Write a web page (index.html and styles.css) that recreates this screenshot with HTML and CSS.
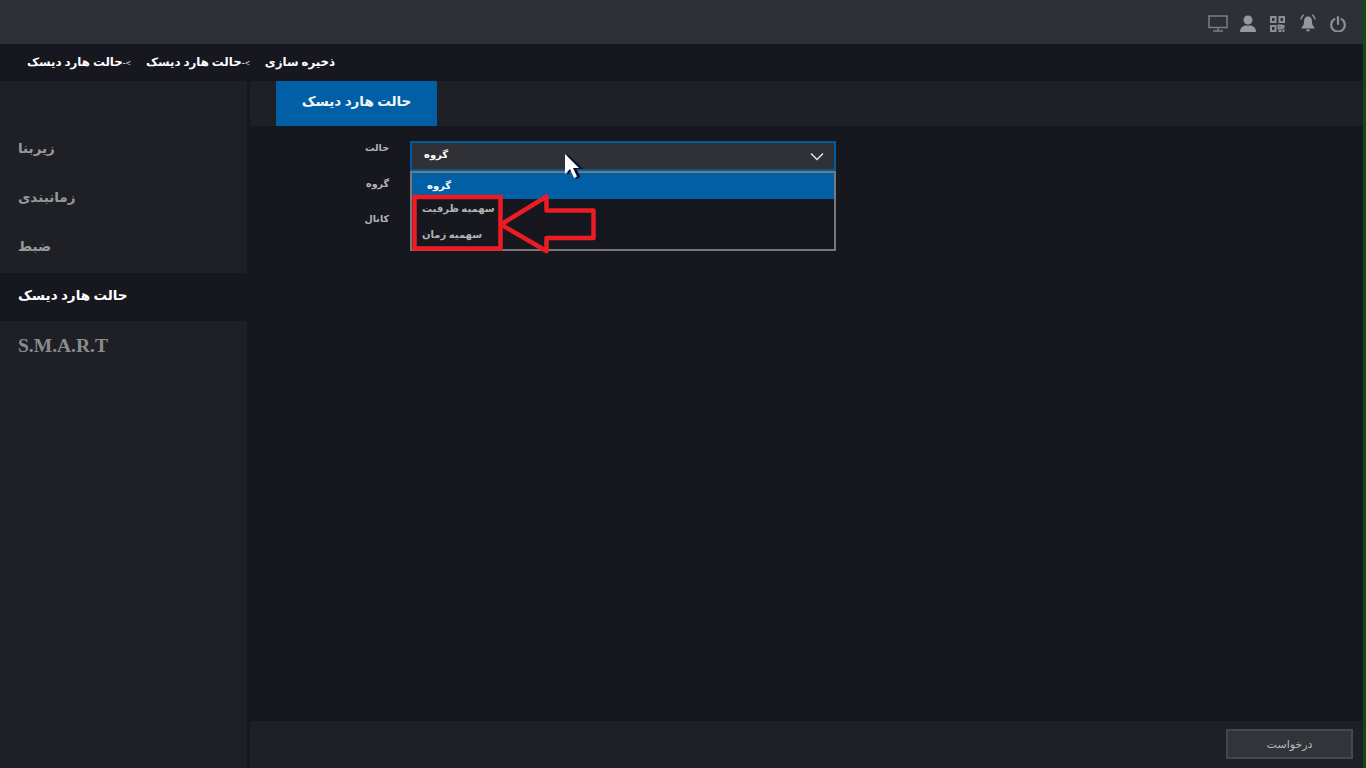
FILE: index.html
```html
<!DOCTYPE html>
<html lang="fa">
<head>
    <meta charset="UTF-8">
    <meta name="viewport" content="width=device-width, initial-scale=1.0">
    <title>حالت هارد دیسک</title>
    <link rel="stylesheet" href="styles.css">
</head>
<body>
    <div class="screen">
        <header class="topbar">
            <svg class="icon" width="20" height="17" viewBox="0 0 20 17" fill="none" stroke="#7b7e82" stroke-width="1.5"><rect x="1" y="1" width="18" height="11.500"/><path d="M10 12.500v3M5 16h10"/></svg>
            <svg class="icon icon-user" width="16" height="17" viewBox="0 0 16 17" fill="#96989b"><circle cx="8" cy="5" r="4.500"/><path d="M0 17c0-4 2.500-6 5-6.500h6c2.500.5 5 2.500 5 6.500z"/></svg>
            <svg class="icon" width="15" height="16" viewBox="0 0 15 16" fill="none" stroke="#8d9093" stroke-width="2"><rect x="1" y="1" width="4.500" height="5"/><rect x="9.500" y="1" width="4.500" height="5"/><rect x="1" y="10" width="4.500" height="5"/><path d="M8.500 9.500h3v3h-3zM13.500 9v3.500M8.500 15h3M13.500 13.500V16"/></svg>
            <svg class="icon" width="16" height="18" viewBox="0 0 16 18" fill="#96989b"><path d="M8 2.500c-2.800 0-4 2-4 5 0 2.800-.7 4.300-2.500 6v1h13v-1c-1.800-1.700-2.500-3.200-2.500-6 0-3-1.200-5-4-5z"/><path d="M6 15.500h4a2 2 0 0 1-4 0z"/><path d="M.7 5.500C1.200 3.500 2.200 2 3.800.9M15.300 5.500c-.5-2-1.500-3.500-3.100-4.600" fill="none" stroke="#96989b" stroke-width="1.300"/></svg>
            <svg class="icon" width="16" height="16" viewBox="0 0 16 16" fill="none" stroke="#8d9093" stroke-width="2.200" stroke-linecap="round"><path d="M8 1.200v6.800"/><path d="M4.300 3.200a6.800 6.800 0 1 0 7.400 0"/></svg>
        </header>

        <nav class="breadcrumb" dir="rtl">
            <span>ذخیره سازی</span>
            <span class="crumb-sep">&gt;-</span>
            <span>حالت هارد دیسک</span>
            <span class="crumb-sep">&gt;-</span>
            <span>حالت هارد دیسک</span>
        </nav>

        <div class="main">
            <aside class="sidebar">
                <a class="side-item" dir="rtl">زیربنا</a>
                <a class="side-item" dir="rtl">زمانبندی</a>
                <a class="side-item" dir="rtl">ضبط</a>
                <a class="side-item active" dir="rtl">حالت هارد دیسک</a>
                <a class="side-item smart">S.M.A.R.T</a>
            </aside>

            <section class="panel">
                <div class="tabs">
                    <div class="tab" dir="rtl">حالت هارد دیسک</div>
                </div>

                <div class="content">
                    <div class="labels">
                        <label dir="rtl">حالت</label>
                        <label dir="rtl">گروه</label>
                        <label dir="rtl">کانال</label>
                    </div>
                    <div class="select-wrap">
                        <div class="select">
                            <span dir="rtl">گروه</span>
                            <svg width="14" height="9" viewBox="0 0 14 9" fill="none" stroke="#e4e5e6" stroke-width="1.500"><path d="M1 1.500l6 6 6-6"/></svg>
                        </div>
                        <ul class="options">
                            <li class="selected"><span dir="rtl">گروه</span></li>
                            <li><span dir="rtl">سهمیه ظرفیت</span></li>
                            <li><span dir="rtl">سهمیه زمان</span></li>
                        </ul>
                    </div>
                </div>

                <div class="footer">
                    <button class="apply" dir="rtl">درخواست</button>
                </div>
            </section>
        </div>

        <div class="edge"></div>

        <svg class="markup" width="190" height="66" viewBox="0 0 190 66" fill="none" stroke="#ed1c24" stroke-width="4.500">
            <rect x="2.500" y="5" width="86" height="51.500"/>
            <path d="M89 32.500l45.500-28v14h47V46h-47v13z" stroke-linejoin="round"/>
        </svg>

        <svg class="cursor" width="20" height="28" viewBox="0 0 20 28"><path d="M3 1v21l5-5 4 9 4-2-4-8h7z" fill="#0a1230" transform="translate(1.500 0)"/><path d="M2 1v20l5-5 4 9 3-1.500-4-8.500h6z" fill="#fff"/></svg>
    </div>
</body>
</html>
```

FILE: styles.css
```css
* {
    box-sizing: border-box;
}
html, body {
    margin: 0;
    padding: 0;
    height: 100%;
    overflow: hidden;
}
body {
    font-family: "Liberation Serif", "DejaVu Sans", serif;
    background: #17181f;
    color: #fff;
}
.screen {
    position: relative;
    width: 1366px;
    height: 768px;
    display: flex;
    flex-direction: column;
    overflow: hidden;
}
.topbar {
    height: 44px;
    flex: none;
    background: #2d3037;
    display: flex;
    align-items: flex-end;
    justify-content: flex-end;
    gap: 14.5px;
    padding: 0 20px 12px 0;
}
.icon {
    display: block;
}
.icon-user {
    margin-left: -2.500px;
}
.breadcrumb {
    height: 37px;
    flex: none;
    background: #17181f;
    display: flex;
    align-items: center;
    justify-content: flex-end;
    flex-direction: row-reverse;
    direction: ltr;
    padding-left: 27px;
    font-size: 11.800px;
    font-weight: bold;
    white-space: nowrap;
}
.breadcrumb span {
    direction: rtl;
}
.crumb-sep {
    font-size: 9px;
    margin-right: 15px;
}
.main {
    flex: 1;
    display: flex;
    min-height: 0;
}
.sidebar {
    width: 247px;
    flex: none;
    background: #1f2026;
    padding-top: 43px;
    display: flex;
    flex-direction: column;
}
.side-item {
    height: 49px;
    padding-left: 18px;
    display: flex;
    align-items: center;
    justify-content: flex-end;
    font-size: 13.500px;
    font-weight: bold;
    color: #98999b;
}
.side-item.active {
    height: 48px;
    margin-top: 2px;
    padding-bottom: 4px;
    background: #17181f;
    color: #fff;
}
.side-item.smart {
    justify-content: flex-start;
    padding-top: 1px;
    font-size: 19.500px;
    color: #8a8b8e;
}
.panel {
    flex: 1;
    margin-left: 3px;
    display: flex;
    flex-direction: column;
    min-width: 0;
}
.tabs {
    height: 45px;
    flex: none;
    background: #1f2026;
    padding-left: 26px;
}
.tab {
    width: 161px;
    height: 45px;
    padding-bottom: 4px;
    background: #005fa5;
    display: flex;
    align-items: center;
    justify-content: center;
    font-size: 13.500px;
    font-weight: bold;
    color: #f2f6fa;
}
.content {
    flex: 1;
    background: #17181f;
    display: flex;
    padding-top: 15px;
    padding-left: 100px;
}
.labels {
    width: 39px;
    padding-top: 1px;
    display: flex;
    flex-direction: column;
    align-items: flex-end;
    margin-right: 21px;
    gap: 18.500px;
    font-size: 9.500px;
    font-weight: bold;
    color: #b3b4b5;
}
.labels label {
    height: 17px;
    line-height: 13px;
}
.select-wrap {
    width: 426px;
}
.select {
    height: 30px;
    background: #2f3137;
    border: 2px solid #005a9c;
    display: flex;
    align-items: center;
    justify-content: space-between;
    padding: 0 10px 3px 12px;
    font-size: 10px;
    font-weight: bold;
    color: #fff;
}
.select svg {
    margin-top: 4px;
}
.options {
    list-style: none;
    margin: 0;
    padding: 0;
    height: 80px;
    background: #17181f;
    border: 2px solid #77787a;
    font-size: 10px;
    font-weight: bold;
    color: #b3b4b5;
}
.options li {
    height: 26px;
    display: flex;
    align-items: center;
    padding-left: 10px;
    padding-bottom: 7px;
}
.options li.selected {
    height: 26px;
    background: #005fa5;
    color: #fff;
    padding-left: 15px;
    padding-bottom: 2px;
}
.footer {
    height: 47px;
    flex: none;
    background: #1f2026;
    display: flex;
    justify-content: flex-end;
    align-items: flex-start;
    padding: 8px 13px 0 0;
}
.apply {
    width: 127px;
    height: 30px;
    background: #32343a;
    border: 2px solid #45474c;
    font-family: inherit;
    font-size: 11px;
    color: #b9babb;
}
.edge {
    position: absolute;
    top: 0;
    right: 0;
    width: 3px;
    height: 768px;
    background: #0c4a16;
}
.markup {
    position: absolute;
    left: 412px;
    top: 192px;
}
.cursor {
    position: absolute;
    left: 563px;
    top: 153px;
}
```
